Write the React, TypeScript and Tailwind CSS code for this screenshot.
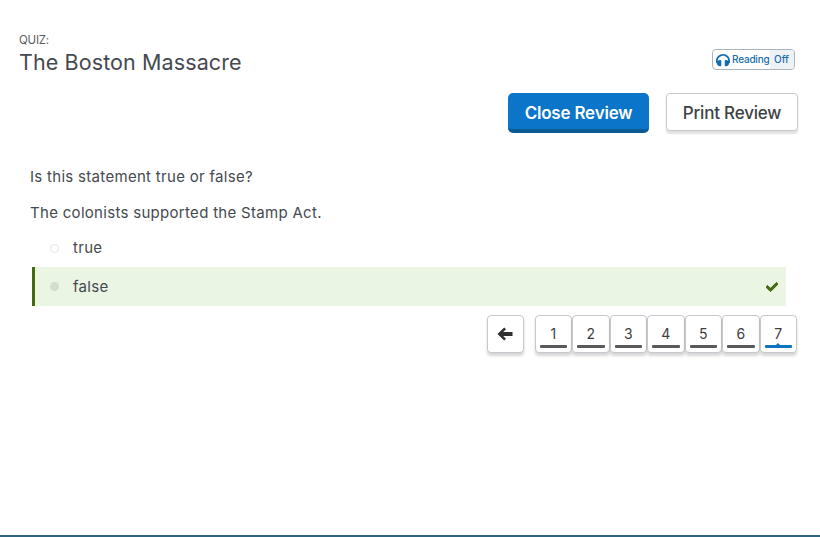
import React from 'react';
import { FaCheck, FaHeadphones } from 'react-icons/fa';

const pages = [1, 2, 3, 4, 5, 6, 7];

const PageButton: React.FC<{ n: number; active?: boolean }> = ({ n, active }) => (
  <div className="relative flex h-[38px] w-[37.5px] flex-col items-center rounded-[4px] border border-[#c4c9cf] bg-white pt-[10px] text-[14px] leading-[16px] text-[#3d3d3d] shadow-[0_3px_3px_rgba(0,0,0,0.16)]">
    <span>{n}</span>
    <span className={`absolute bottom-[4px] left-[4px] right-[4px] h-[3px] rounded-[1px] ${active ? 'bg-[#0f75bc]' : 'bg-[#5a5a5a]'}`} />
    {active && (
      <span className="absolute bottom-[6px] left-1/2 -ml-[3px] h-0 w-0 border-x-[3px] border-b-[3px] border-x-transparent border-b-[#0f75bc]" />
    )}
  </div>
);

const App: React.FC = () => {
  return (
    <div className="flex h-[537px] w-[820px] flex-col overflow-hidden bg-white font-['Inter',sans-serif] text-[#454a50]">
      <div className="flex items-start justify-between pl-[19px] pr-[25px] pt-[33px]">
        <div>
          <div className="text-[11.5px] leading-[14px] tracking-[-0.2px] text-[#5a5f64]">QUIZ:</div>
          <div className="text-[21.5px] leading-[30px] tracking-[0.1px]">The Boston Massacre</div>
        </div>
        <div className="mt-[16px] flex h-[21px] w-[83px] overflow-hidden rounded-[4px] border border-[#a9b4bd] text-[10px] leading-[19px] text-[#1b6ca8]">
          <div className="flex flex-1 items-center pl-[3px]">
            <FaHeadphones className="mr-[2px] text-[14px] text-[#0f6cb5]" />
            <span className="font-medium tracking-[-0.2px]">Reading</span>
          </div>
          <div className="w-[24px] bg-[#eff2f5] pl-[4px] font-medium">Off</div>
        </div>
      </div>

      <div className="mt-[16px] flex items-start justify-end gap-[17px] pr-[22px]">
        <button className="h-[40px] w-[141px] rounded-[5px] border-b-[4px] border-[#0a5a94] bg-[#0b75c9] pt-[5px] text-[17px] font-semibold tracking-[-0.2px] text-white">
          Close Review
        </button>
        <button className="h-[38px] w-[132px] rounded-[4px] border border-[#c4c9cf] bg-white pt-[3px] text-[17px] font-medium tracking-[-0.2px] text-[#3d4246] shadow-[0_3px_2px_rgba(0,0,0,0.12)]">
          Print Review
        </button>
      </div>

      <div className="mt-[34px] pl-[30px] text-[15px] leading-[20px] tracking-[0.3px]">Is this statement true or false?</div>
      <div className="mt-[16px] pl-[30px] text-[15px] leading-[20px] tracking-[0.3px]">The colonists supported the Stamp Act.</div>

      <div className="mt-[5px] flex h-[39px] items-center pt-[1px] pl-[50px] text-[15px] tracking-[0.3px]">
        <span className="h-[9px] w-[9px] rounded-full border border-[#e5e7e5] bg-white" />
        <span className="ml-[14px]">true</span>
      </div>
      <div className="ml-[32px] flex h-[39px] w-[754px] items-center justify-between border-l-[3px] border-[#44690f] bg-[#eaf5e4] pl-[15px] pr-[8px] text-[15px] tracking-[0.3px]">
        <div className="flex items-center">
          <span className="h-[9px] w-[9px] rounded-full bg-[#d3dfcd]" />
          <span className="ml-[14px] pt-[1px]">false</span>
        </div>
        <FaCheck className="stroke-[40] text-[12px] text-[#44690f]" />
      </div>

      <div className="mt-[9px] flex items-start justify-end gap-[11px] pr-[23px]">
        <div className="flex h-[38px] w-[37px] items-center justify-center rounded-[4px] border border-[#c4c9cf] bg-white text-[#2f2f2f] shadow-[0_3px_3px_rgba(0,0,0,0.16)]">
          <svg width="16" height="14" viewBox="0 0 16 14" fill="currentColor">
            <path d="M7.2 0.5 L9 2.3 L6.2 5 H15.5 V9 H6.2 L9 11.7 L7.2 13.5 L0.5 7 Z" />
          </svg>
        </div>
        <div className="flex">
          {pages.map((n) => (
            <PageButton key={n} n={n} active={n === 7} />
          ))}
        </div>
      </div>

      <div className="mt-auto h-[2px] bg-[#2f6481]" />
    </div>
  );
};

export default App;
